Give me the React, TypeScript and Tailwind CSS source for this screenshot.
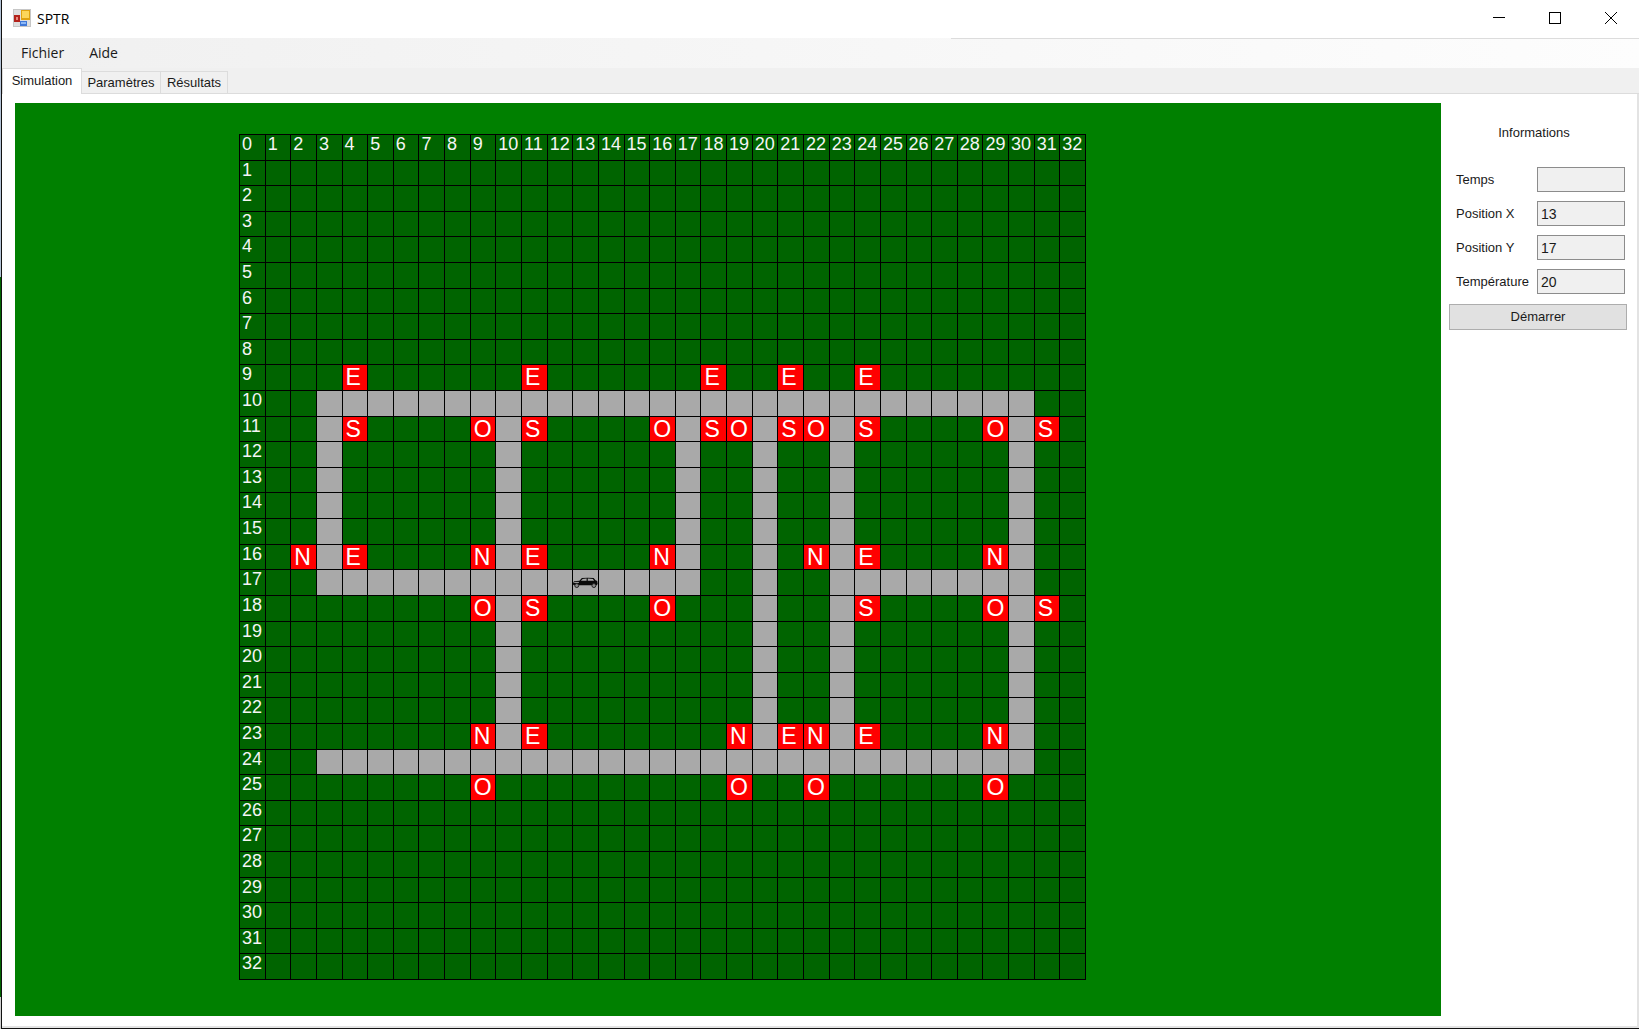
import React from "react";

const SIZE = 33;
const indexes = Array.from({ length: SIZE }, (_, i) => i);

const SIGNS: Record<number, Record<number, string>> = {
  9: { 4: "E", 11: "E", 18: "E", 21: "E", 24: "E" },
  11: { 4: "S", 9: "O", 11: "S", 16: "O", 18: "S", 19: "O", 21: "S", 22: "O", 24: "S", 29: "O", 31: "S" },
  16: { 2: "N", 4: "E", 9: "N", 11: "E", 16: "N", 22: "N", 24: "E", 29: "N" },
  18: { 9: "O", 11: "S", 16: "O", 24: "S", 29: "O", 31: "S" },
  23: { 9: "N", 11: "E", 19: "N", 21: "E", 22: "N", 24: "E", 29: "N" },
  25: { 9: "O", 19: "O", 22: "O", 29: "O" },
};

function isRoad(row: number, col: number) {
  if (row < 10 || row > 24 || col < 3 || col > 30) return false;
  if (row === 10 || row === 24) return true;
  if (row === 17 && (col <= 17 || col >= 23)) return true;
  if (col === 3 || col === 17) return row <= 17;
  return col === 10 || col === 20 || col === 23 || col === 30;
}

function Car() {
  return (
    <svg viewBox="0 0 25 12" className="h-3 w-full" role="img" aria-label="Voiture">
      <path d="M0 6.5 L1 4.2 L6.5 3.8 L9 1 Q15 0.2 21 1 L22.8 3.2 L24.6 4 L25 7 L24 8.2 H1 L0 7.6 Z" fill="#0a0a0a" />
      <path d="M8 3.8 L9.8 1.9 L13.8 1.5 V3.8 Z M15 3.8 V1.5 L20.2 1.9 L21.4 3.8 Z" fill="#a9a9a9" />
      <path d="M1.2 5.4 H6" stroke="#a9a9a9" strokeWidth="1" />
      <circle cx="3.8" cy="8.6" r="2" fill="#8a8a8a" stroke="#222" strokeWidth="1" />
      <circle cx="21.2" cy="8.6" r="2" fill="#8a8a8a" stroke="#222" strokeWidth="1" />
    </svg>
  );
}

function Cell({ row, col }: { row: number; col: number }) {
  const sign = SIGNS[row]?.[col];
  if (sign) {
    return (
      <div className="min-h-0 min-w-0 overflow-hidden border-r border-b border-black bg-[#ff0000] pl-[3px] text-[23px] leading-[25px] text-white">
        {sign}
      </div>
    );
  }
  if (isRoad(row, col)) {
    return (
      <div className="flex min-h-0 min-w-0 items-center border-r border-b border-black bg-[#a9a9a9]">
        {row === 17 && col === 13 && <Car />}
      </div>
    );
  }
  return (
    <div className="min-h-0 min-w-0 border-r border-b border-black bg-[#006400] pl-0.5 text-[18px] leading-[19px] text-[#f5f5f5]">
      {row === 0 ? col : col === 0 ? row : null}
    </div>
  );
}

function AppIcon() {
  return (
    <svg viewBox="0 0 18 18" className="size-[18px]" aria-hidden="true">
      <rect x="0.5" y="0.5" width="17" height="17" fill="#dedede" stroke="#c6c6c6" />
      <rect x="1" y="6" width="6" height="7" fill="#b3221b" />
      <rect x="3" y="8" width="2" height="3" fill="#e98a80" />
      <rect x="8" y="1" width="9" height="10" fill="#e0a210" />
      <rect x="9" y="2" width="7" height="7" fill="#fcd65a" />
      <rect x="7" y="12" width="7" height="5" fill="#3f78d8" />
      <rect x="8" y="13" width="5" height="2" fill="#8db8f5" />
    </svg>
  );
}

const FIELDS = [
  { id: "temps", label: "Temps", value: "" },
  { id: "posx", label: "Position X", value: "13" },
  { id: "posy", label: "Position Y", value: "17" },
  { id: "temperature", label: "Température", value: "20" },
];

export default function App() {
  return (
    <div className="flex min-h-screen bg-white font-['Liberation_Sans',Arial,sans-serif] text-[13px] text-[#1a1a1a]">
      <div className="flex w-px flex-none flex-col">
        <div className="h-[277px] bg-[#b4c3d6]" />
        <div className="flex-1 bg-[#006400]" />
        <div className="h-8 bg-[#cfcfcf]" />
      </div>
      <div className="flex min-w-0 flex-1 flex-col border-b border-l border-[#111]">
        <header className="flex h-[38px] flex-none items-center bg-white pb-0.5 pl-[11px] font-['Open_Sans','Noto_Sans',sans-serif] text-black">
          <AppIcon />
          <h1 className="ml-1.5 flex-1 text-[14px]">SPTR</h1>
          <button aria-label="Réduire" className="flex h-9 w-14 items-center justify-center">
            <svg viewBox="0 0 12 12" className="size-3" shapeRendering="crispEdges"><path d="M0 5.5H12" stroke="#000" /></svg>
          </button>
          <button aria-label="Agrandir" className="flex h-9 w-14 items-center justify-center">
            <svg viewBox="0 0 12 12" className="size-3" shapeRendering="crispEdges"><rect x="0.5" y="0.5" width="11" height="11" fill="none" stroke="#000" /></svg>
          </button>
          <button aria-label="Fermer" className="flex h-9 w-14 items-center justify-center">
            <svg viewBox="0 0 12 12" className="size-3"><path d="M0 0L12 12M12 0L0 12" stroke="#000" /></svg>
          </button>
        </header>
        <nav className="flex h-[30px] flex-none flex-col bg-linear-to-r from-[#f0f0f0] to-[#fdfdfd] font-['Open_Sans','Noto_Sans',sans-serif] text-[14px]">
          <div className="h-px w-[42%] self-end bg-[#dcdcdc]" />
          <div className="flex flex-1 items-center gap-[25px] pb-[3px] pl-[19px]">
            <button>Fichier</button>
            <button>Aide</button>
          </div>
        </nav>
        <div role="tablist" className="flex h-[26px] flex-none items-end bg-[#f0f0f0]">
          <button role="tab" aria-selected="true" className="h-[26px] w-20 border border-b-0 border-[#dcdcdc] bg-white pb-0.5">Simulation</button>
          <button role="tab" aria-selected="false" className="h-[23px] w-[79px] border-t border-r border-b border-[#dcdcdc]">Paramètres</button>
          <button role="tab" aria-selected="false" className="h-[23px] w-[67px] border-t border-r border-b border-[#dcdcdc]">Résultats</button>
          <div className="flex-1 self-stretch border-b border-[#dcdcdc]" />
        </div>
        <main className="flex flex-1 border-r-2 border-b-2 border-[#e3e3e3] pt-[9px] pb-[10px] pl-[13px]">
          <section className="flex-1 bg-[#008000] pt-[31px] pb-[35px] pl-[224px]">
            <div className="grid h-[846px] w-[847px] grid-cols-[repeat(33,minmax(0,1fr))] grid-rows-[repeat(33,minmax(0,1fr))] border-t border-l border-black">
              {indexes.map((row) => indexes.map((col) => <Cell key={`${row}-${col}`} row={row} col={col} />))}
            </div>
          </section>
          <aside className="w-[196px] flex-none pt-5 pr-[10px] pl-2">
            <h2 className="pr-2 text-center leading-5">Informations</h2>
            <div className="mt-6 flex flex-col gap-[9px] pr-0.5 pl-[7px]">
              {FIELDS.map((f) => (
                <div key={f.id} className="flex h-[25px] items-center justify-between">
                  <label htmlFor={f.id}>{f.label}</label>
                  <input id={f.id} readOnly defaultValue={f.value} className="h-[25px] w-[88px] border border-[#8c8c8c] bg-[#f0f0f0] pl-[3px] text-[14px] outline-none" />
                </div>
              ))}
            </div>
            <button className="mt-[10px] h-[26px] w-full border border-[#adadad] bg-[#e1e1e1]">Démarrer</button>
          </aside>
        </main>
      </div>
    </div>
  );
}
